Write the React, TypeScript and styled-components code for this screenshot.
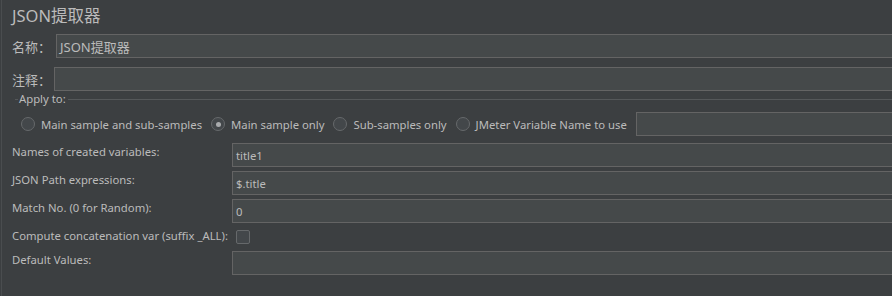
import styled, { createGlobalStyle } from "styled-components";

const GlobalStyle = createGlobalStyle`
  html, body {
    margin: 0;
    padding: 0;
    background: #3c3f41;
    overflow: hidden;
  }
  body {
    font-family: "Noto Sans", "Noto Sans CJK SC", sans-serif;
    font-size: 11.3px;
    color: #bbbbbb;
  }
`;

const Page = styled.div`
  height: 296px;
  padding-left: 1px;
  overflow: hidden;
`;

const Panel = styled.div`
  height: 100%;
  border-left: 1px solid #4a4d4f;
  padding-left: 10px;
  margin-right: -6px;
  display: flex;
  flex-direction: column;
`;

const Title = styled.h1`
  margin: 6px 0 8px;
  height: 20px;
  line-height: 20px;
  font-size: 16.5px;
  font-weight: 400;
  font-family: "Noto Sans", "Noto Sans CJK SC", sans-serif;
  color: #bbbbbb;
`;

const NameBlock = styled.div`
  display: flex;
  flex-direction: column;
  gap: 9px;
`;

const NameRow = styled.div<{ $gap: number }>`
  display: flex;
  align-items: center;
  gap: ${(p) => p.$gap}px;
  height: 24px;
`;

const CjkLabel = styled.span`
  font-size: 13px;
  font-family: "Noto Sans CJK SC", sans-serif;
  white-space: nowrap;
`;

const Field = styled.div`
  flex: 1;
  height: 24px;
  box-sizing: border-box;
  border: 1px solid #646464;
  background: #45494a;
  padding: 0 3px;
  display: flex;
  align-items: center;
  color: #bbbbbb;
  white-space: nowrap;
  min-width: 0;
`;

const CjkField = styled(Field)`
  font-family: "Noto Sans", "Noto Sans CJK SC", sans-serif;
  font-size: 13px;
`;

const Group = styled.fieldset`
  margin: 0 0 7px 3px;
  padding: 0 0 0 3px;
  border: none;
  border-top: 1px solid #55585a;
  min-width: 0;
`;

const Legend = styled.legend`
  padding: 0 2px 0 1px;
  line-height: 16px;
`;

const RadioRow = styled.div`
  display: flex;
  align-items: center;
  height: 24px;
  margin-top: 5px;
  padding-left: 3px;
  gap: 9px;
`;

const RadioOption = styled.label`
  display: flex;
  align-items: center;
  gap: 6px;
  white-space: nowrap;
`;

const RadioCircle = styled.span<{ $checked?: boolean }>`
  width: 14px;
  height: 14px;
  box-sizing: border-box;
  border-radius: 50%;
  border: 1px solid #66696b;
  background: #43474a;
  display: flex;
  align-items: center;
  justify-content: center;
  &::after {
    content: "";
    display: ${(p) => (p.$checked ? "block" : "none")};
    width: 5px;
    height: 5px;
    border-radius: 50%;
    background: #a9abad;
  }
`;

const VarField = styled(Field)`
  margin-left: 0;
`;

const FormGrid = styled.div`
  display: grid;
  grid-template-columns: 216px 1fr;
  grid-template-rows: 24px 24px 24px 20px 24px;
  column-gap: 4px;
  row-gap: 4px;
`;

const GridLabel = styled.span`
  align-self: start;
  line-height: 15px;
  padding-top: 1px;
  white-space: nowrap;
`;

const CheckBox = styled.span`
  align-self: center;
  width: 14px;
  height: 14px;
  box-sizing: border-box;
  margin-left: 4px;
  border: 1px solid #66696b;
  border-radius: 2px;
  background: #43474a;
`;

const options = [
  { label: "Main sample and sub-samples", checked: false },
  { label: "Main sample only", checked: true },
  { label: "Sub-samples only", checked: false },
  { label: "JMeter Variable Name to use", checked: false },
];

export default function App() {
  return (
    <Page>
      <GlobalStyle />
      <Panel>
        <Title>JSON提取器</Title>
        <NameBlock>
          <NameRow $gap={5}>
            <CjkLabel>名称：</CjkLabel>
            <CjkField>JSON提取器</CjkField>
          </NameRow>
          <NameRow $gap={3}>
            <CjkLabel>注释：</CjkLabel>
            <CjkField />
          </NameRow>
        </NameBlock>
        <Group>
          <Legend>Apply to:</Legend>
          <RadioRow>
            {options.map((o) => (
              <RadioOption key={o.label}>
                <RadioCircle $checked={o.checked} />
                {o.label}
              </RadioOption>
            ))}
            <VarField />
          </RadioRow>
        </Group>
        <FormGrid>
          <GridLabel>Names of created variables:</GridLabel>
          <Field>title1</Field>
          <GridLabel>JSON Path expressions:</GridLabel>
          <Field>$.title</Field>
          <GridLabel>Match No. (0 for Random):</GridLabel>
          <Field>0</Field>
          <GridLabel>Compute concatenation var (suffix _ALL):</GridLabel>
          <CheckBox />
          <GridLabel>Default Values:</GridLabel>
          <Field />
        </FormGrid>
      </Panel>
    </Page>
  );
}
